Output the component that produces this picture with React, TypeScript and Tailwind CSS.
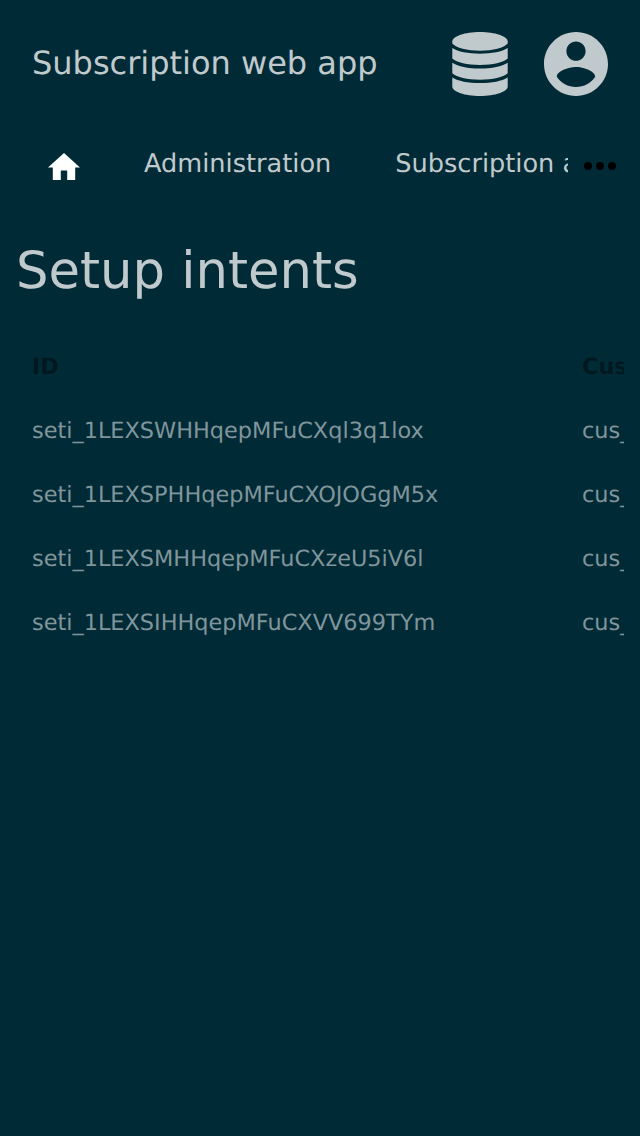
import React from "react";

const intents = [
  { id: "seti_1LEXSWHHqepMFuCXql3q1lox", customer: "cus_LwQp8vRt2k" },
  { id: "seti_1LEXSPHHqepMFuCXOJOGgM5x", customer: "cus_LwQp5hNs7d" },
  { id: "seti_1LEXSMHHqepMFuCXzeU5iV6l", customer: "cus_LwQp2cXy9f" },
  { id: "seti_1LEXSIHHqepMFuCXVV699TYm", customer: "cus_LwQp1aBz4m" },
];

function DatabaseIcon() {
  return (
    <svg viewBox="0 0 56 64" className="h-16 w-14" fill="currentColor">
      <path d="M28 0C43 0 55.7 4.2 55.7 9.5V11.5C52 15.8 41 18.7 28 18.7S4 15.8 .3 11.5V9.5C.3 4.2 13 0 28 0Z" />
      <path d="M.3 16C6 19.6 16 21.7 28 21.7S50 19.6 55.7 16V26.6C51 30.6 41 33 28 33S5 30.6 .3 26.6Z" />
      <path d="M.3 30.8C6 34.4 16 36.6 28 36.6S50 34.4 55.7 30.8V41.3C51 45.3 41 47.7 28 47.7S5 45.3 .3 41.3Z" />
      <path d="M.3 45.4C6 49 16 51 28 51S50 49 55.7 45.4V54.5C55.7 59.8 43 64 28 64S.3 59.8 .3 54.5Z" />
    </svg>
  );
}

function AccountIcon() {
  return (
    <svg viewBox="2 2 20 20" className="size-16" fill="currentColor">
      <path d="M12 2C6.48 2 2 6.48 2 12s4.48 10 10 10 10-4.48 10-10S17.52 2 12 2zm0 3c1.66 0 3 1.34 3 3s-1.34 3-3 3-3-1.34-3-3 1.34-3 3-3zm0 14.2c-2.5 0-4.71-1.28-6-3.22.03-1.99 4-3.08 6-3.08 1.99 0 5.97 1.09 6 3.08-1.29 1.94-3.5 3.22-6 3.22z" />
    </svg>
  );
}

export default function App() {
  return (
    <div className="flex h-[1136px] w-[640px] flex-col overflow-hidden bg-[#002b36] font-['DejaVu_Sans',sans-serif] text-[#c0cacd] [text-rendering:geometricPrecision]">
      <header className="flex h-32 items-center justify-between px-8">
        <span className="pb-0.5 text-[32px] whitespace-nowrap">Subscription web app</span>
        <div className="flex items-center gap-9">
          <DatabaseIcon />
          <AccountIcon />
        </div>
      </header>
      <nav className="flex h-[72px] items-center">
        <div className="flex h-full w-[568px] items-center overflow-hidden whitespace-nowrap text-[25.6px]">
          <svg viewBox="2 3 20 17" className="mt-[5px] ml-12 h-[27.2px] w-8 shrink-0 fill-white">
            <path d="M10 20v-6h4v6h5v-8h3L12 3 2 12h3v8z" />
          </svg>
          <span className="ml-16">Administration</span>
          <span className="ml-16">Subscription administration</span>
        </div>
        <svg viewBox="0 0 32 8" className="mt-1 ml-4 h-2 w-8 fill-black">
          <circle cx="4" cy="4" r="4" /><circle cx="16" cy="4" r="4" /><circle cx="28" cy="4" r="4" />
        </svg>
      </nav>
      <main className="px-4 pt-[37px]">
        <h1 className="text-[51.2px] leading-[68px]">Setup intents</h1>
        <div className="mt-[31px] overflow-hidden">
          <table className="w-[1100px] table-fixed text-left text-[22.4px]">
            <thead>
              <tr className="h-16 text-[#001920]">
                <th className="w-[550px] p-0 pl-4">ID</th>
                <th className="p-0 pl-4">Customer</th>
              </tr>
            </thead>
            <tbody className="text-[#80959b]">
              {intents.map((intent) => (
                <tr key={intent.id} className="h-16">
                  <td className="p-0 pl-4">{intent.id}</td>
                  <td className="p-0 pl-4">{intent.customer}</td>
                </tr>
              ))}
            </tbody>
          </table>
        </div>
      </main>
    </div>
  );
}
